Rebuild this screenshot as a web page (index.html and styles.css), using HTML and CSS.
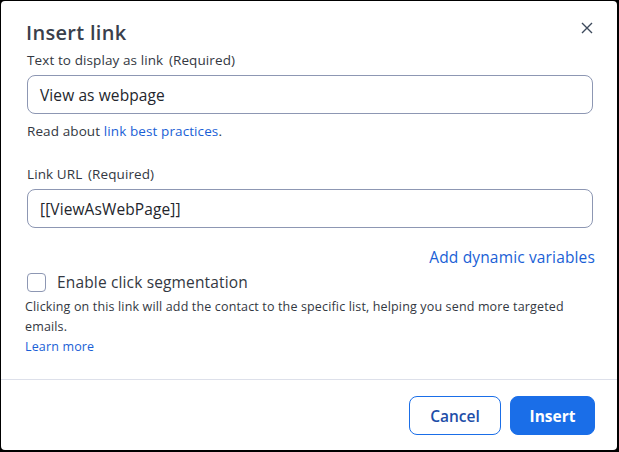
FILE: index.html
```html
<!DOCTYPE html>
<html>
<head>
<meta charset="utf-8">
<link rel="stylesheet" href="styles.css">
</head>
<body>
<div class="dialog">
  <div class="header">
    <h1 class="title">Insert link</h1>
    <button class="close" aria-label="Close">
      <svg width="12" height="12" viewBox="0 0 12 12"><path d="M1 1L11 11M11 1L1 11" stroke="#3d4a5c" stroke-width="1.4" fill="none"/></svg>
    </button>
  </div>
  <div class="body">
    <label class="label">Text to display as link <span class="req">(Required)</span></label>
    <div class="input">View as webpage</div>
    <p class="help">Read about <a class="link">link best practices</a>.</p>

    <label class="label">Link URL <span class="req">(Required)</span></label>
    <div class="input">[[ViewAsWebPage]]</div>
    <div class="dyn"><a class="link">Add dynamic variables</a></div>

    <div class="check-row">
      <span class="checkbox"></span>
      <span class="check-label">Enable click segmentation</span>
    </div>
    <p class="desc">Clicking on this link will add the contact to the specific list, helping you send more targeted emails.</p>
    <a class="link learn">Learn more</a>
  </div>
  <div class="footer">
    <button class="btn btn-secondary">Cancel</button>
    <button class="btn btn-primary">Insert</button>
  </div>
</div>
</body>
</html>
```
FILE: styles.css
```css
html, body {
  margin: 0;
  padding: 0;
  background: #000;
}
body {
  width: 619px;
  height: 452px;
  padding: 1px 2px 2px 1px;
  box-sizing: border-box;
  font-family: "Open Sans", Lato, sans-serif;
  color: #2f3440;
}
.dialog {
  width: 616px;
  height: 449px;
  background: #fff;
  border-radius: 4px;
  display: flex;
  flex-direction: column;
  box-sizing: border-box;
}
.header {
  display: flex;
  justify-content: space-between;
  align-items: flex-start;
  padding: 20px 24px 0 25px;
}
.title {
  margin: 0;
  font-size: 20px;
  font-weight: 600;
  letter-spacing: 0.3px;
  color: #3a3f4c;
  line-height: 24px;
}
.close {
  border: 0;
  background: none;
  padding: 0;
  margin-top: 1px;
  width: 12px;
  height: 12px;
  display: flex;
}
.body {
  padding: 6px 24px 0 26px;
  display: flex;
  flex-direction: column;
}
.label {
  font-size: 13.5px;
  letter-spacing: 0.1px;
  line-height: 18px;
  color: #333842;
  margin-bottom: 6px;
}
.req { margin-left: 2px; }
.input {
  height: 39px;
  box-sizing: border-box;
  border: 1px solid #8d97b3;
  border-radius: 8px;
  padding: 0 12px;
  display: flex;
  align-items: center;
  font-size: 15.5px;
  letter-spacing: 0.1px;
  color: #23262d;
}
.help {
  margin: 8px 0 25px;
  font-size: 13.5px;
  letter-spacing: 0.1px;
  line-height: 18px;
  color: #333842;
}
.link {
  color: #1a5fd6;
  text-decoration: none;
}
.dyn {
  display: flex;
  justify-content: flex-end;
  margin-top: 19px;
  font-size: 15.5px;
  letter-spacing: 0.15px;
  line-height: 20px;
  margin-right: -2px;
}
.check-row {
  display: flex;
  align-items: center;
  margin-top: 4px;
  gap: 11px;
}
.checkbox {
  width: 19px;
  height: 19px;
  box-sizing: border-box;
  border: 1px solid #8d97b3;
  border-radius: 4px;
}
.check-label {
  font-size: 15.5px;
  letter-spacing: 0.15px;
  color: #333842;
}
.desc {
  margin: 4px 0 0 -2px;
  font-size: 12.5px;
  letter-spacing: 0.15px;
  line-height: 20px;
  color: #333842;
}
.learn {
  margin-left: -2px;
  font-size: 12.5px;
  letter-spacing: 0.15px;
  line-height: 20px;
}
.footer {
  margin-top: auto;
  border-top: 1px solid #dde0ea;
  display: flex;
  justify-content: flex-end;
  gap: 9px;
  padding: 16px 22px 15px 0;
}
.btn {
  height: 39px;
  border-radius: 8px;
  font-family: inherit;
  font-size: 15.5px;
  font-weight: 600;
  box-sizing: border-box;
}
.btn-secondary {
  width: 92px;
  background: #fff;
  border: 1px solid #1a6ee8;
  color: #1d4ea8;
}
.btn-primary {
  width: 85px;
  background: #1a6ee8;
  border: 1px solid #1a6ee8;
  color: #fff;
  font-weight: 700;
}
```
